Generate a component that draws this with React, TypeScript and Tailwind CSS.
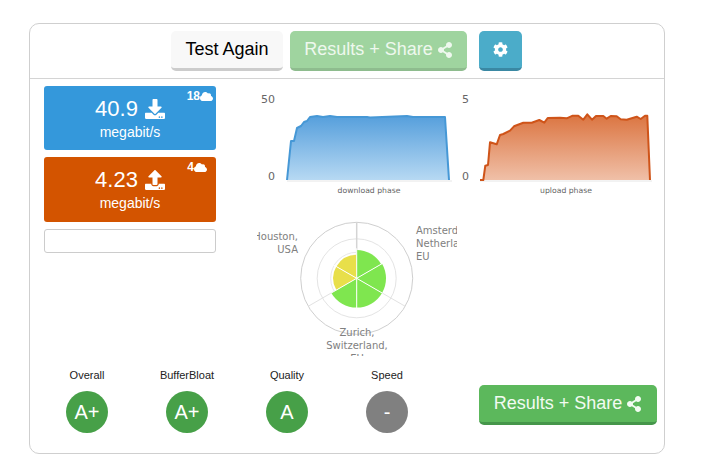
import { FaCloud, FaCog, FaDownload, FaShareAlt, FaUpload } from "react-icons/fa";

const SANS = "font-['Liberation_Sans',Arial,sans-serif]";

const downloadLine =
  "287,180 291,141 294,141 297,128 301,126 304,122 307,121 310,117 317,116 323,117 330,116 337,117 367,117 370,117.5 407,116 413,117 445,117 449,180";
const uploadLine =
  "480,180 483.3,180 485.3,165.7 488,165 490,142.3 496.7,144.3 500,135 503.3,134 510,130.7 514,126.3 523.3,122.7 531.7,122.7 539.3,120 544.3,122.7 547.7,118 560,117.7 566.7,118.3 572.7,115.7 578.3,115.7 583.3,119.7 587.3,114.3 592,119.7 596,116 603.3,116 606.7,118.7 610.7,116 616.7,116.3 620.7,119.3 626.7,119.7 636.7,116.7 640.7,119 645,115.7 647.3,115.7 650,180";

const CX = 356.7;
const CY = 278.3;

// wedge of the radar, angles clockwise from the top
function wedge(from: number, to: number, r: number) {
  const pt = (a: number) => {
    const rad = (a * Math.PI) / 180;
    return `${CX + r * Math.sin(rad)} ${CY - r * Math.cos(rad)}`;
  };
  return `M${CX} ${CY}L${pt(from)}A${r} ${r} 0 0 1 ${pt(to)}Z`;
}

function spoke(a: number, r: number) {
  const rad = (a * Math.PI) / 180;
  return { x2: CX + r * Math.sin(rad), y2: CY - r * Math.cos(rad) };
}

function PhaseChart({
  id,
  viewBox,
  width,
  line,
  stroke,
  top,
  bottom,
  max,
  maxX,
  zeroX,
  axisFrom,
  axisTo,
  label,
  labelX,
}: {
  id: string;
  viewBox: string;
  width: number;
  line: string;
  stroke: string;
  top: string;
  bottom: string;
  max: string;
  maxX: number;
  zeroX: number;
  axisFrom: number;
  axisTo: number;
  label: string;
  labelX: number;
}) {
  return (
    <svg viewBox={viewBox} width={width} height={115} className="block shrink-0">
      <defs>
        <linearGradient id={id} x1="0" y1="0" x2="0" y2="1">
          <stop offset="0" stopColor={top} />
          <stop offset="1" stopColor={bottom} />
        </linearGradient>
      </defs>
      <line x1={axisFrom} y1="181" x2={axisTo} y2="181" stroke="#e6e6e6" />
      <polygon points={line} fill={`url(#${id})`} />
      <polyline points={line} fill="none" stroke={stroke} strokeWidth="2" strokeLinejoin="round" />
      <g fontFamily="'DejaVu Sans',sans-serif" fill="#666">
        <text x={maxX} y="103" fontSize="11" textAnchor="end">{max}</text>
        <text x={zeroX} y="180" fontSize="11" textAnchor="end">0</text>
        <text x={labelX} y="193" fontSize="7.7" textAnchor="middle">{label}</text>
      </g>
    </svg>
  );
}

function Radar() {
  return (
    <svg viewBox="257 215 200 141" width={200} height={141} className="block">
      <g fill="none">
        <circle cx={CX} cy={CY} r="56" stroke="#cfcfcf" />
        <circle cx={CX} cy={CY} r="39.5" stroke="#e4e4e4" />
        <circle cx={CX} cy={CY} r="26" stroke="#e8e8e8" />
      </g>
      <line x1={CX} y1={CY} {...spoke(0, 56)} stroke="#d4d4d4" strokeWidth="1.5" />
      <line x1={CX} y1={CY} {...spoke(120, 56)} stroke="#e2e2e2" />
      <line x1={CX} y1={CY} {...spoke(240, 56)} stroke="#e2e2e2" />
      <path d={wedge(0, 60, 28.3)} fill="#7fe64f" />
      <path d={wedge(60, 120, 29.3)} fill="#7fe64f" />
      <path d={wedge(120, 180, 29.3)} fill="#7fe64f" />
      <path d={wedge(180, 240, 29.3)} fill="#7fe64f" />
      <path d={wedge(240, 300, 23.5)} fill="#e8df4a" />
      <path d={wedge(300, 360, 23.5)} fill="#e8df4a" />
      {[0, 60, 120, 180, 240, 300].map((a) => (
        <line key={a} x1={CX} y1={CY} {...spoke(a, 30)} stroke="#fff" strokeWidth="1" />
      ))}
      <g fontFamily="'DejaVu Sans',sans-serif" fontSize="10" fill="#808080">
        <text x="298" y="240" textAnchor="end">Houston,</text>
        <text x="298" y="253" textAnchor="end">USA</text>
        <text x="416" y="234">Amsterdam,</text>
        <text x="416" y="247">Netherlands,</text>
        <text x="416" y="260">EU</text>
        <text x="357" y="336" textAnchor="middle">Zurich,</text>
        <text x="357" y="349" textAnchor="middle">Switzerland,</text>
        <text x="357" y="362" textAnchor="middle">EU</text>
      </g>
    </svg>
  );
}

function SpeedBox({
  bg,
  height,
  value,
  icon,
  count,
  badgeRight,
}: {
  bg: string;
  height: string;
  value: string;
  icon: React.ReactNode;
  count: string;
  badgeRight: string;
}) {
  return (
    <div className={`relative flex flex-col items-center rounded-[3px] pt-[9px] text-white ${height} ${bg}`}>
      <div className="flex h-[28px] items-center gap-[7px] text-[22px] leading-none">
        {value}
        {icon}
      </div>
      <div className="text-[14px] leading-[18px]">megabit/s</div>
      <div className={`absolute top-[3px] flex items-center text-[12px] leading-[14px] font-bold ${badgeRight}`}>
        {count}
        <FaCloud className="text-[13px]" />
      </div>
    </div>
  );
}

function Grade({ label, grade, color }: { label: string; grade: string; color: string }) {
  return (
    <div className="flex w-[100px] flex-col items-center">
      <div className="h-[15px] text-[11px] leading-[15px] text-[#222]">{label}</div>
      <div className={`mt-[8px] flex h-[42px] w-[42px] items-center justify-center rounded-full text-[20px] text-white ${color}`}>
        {grade}
      </div>
    </div>
  );
}

export default function App() {
  return (
    <div className={`h-[473px] w-[712px] overflow-hidden bg-white pt-[23px] pl-[29px] ${SANS}`}>
      <div className="h-[431px] w-[636px] rounded-[10px] border border-[#cfcfcf]">
        <div className="flex h-[55px] items-start gap-[7px] border-b border-[#d4d4d4] pt-[7px] pl-[141px]">
          <button className="flex h-[40px] w-[112px] items-center justify-center rounded-[5px] border-b-[3px] border-[#cccccc] bg-[#f8f8f8] text-[18px] text-black">
            Test Again
          </button>
          <button className="flex h-[40px] w-[177px] items-center justify-center gap-[4px] rounded-[5px] border-b-[3px] border-[#8ebc8e] bg-[#9fd49f] text-[18px] text-[#eef8ee]">
            Results + Share
            <FaShareAlt className="text-[16px]" />
          </button>
          <button className="ml-[5px] flex h-[40px] w-[43px] items-center justify-center rounded-[5px] border-b-[3px] border-[#3a88a3] bg-[#4bacc9] text-[15px] text-white">
            <FaCog />
          </button>
        </div>

        <div className="flex h-[281px]">
          <div className="ml-[14px] flex w-[172px] shrink-0 flex-col gap-[7px] pt-[7px]">
            <SpeedBox
              bg="bg-[#3498db]"
              height="h-[64px]"
              value="40.9"
              icon={<FaDownload className="text-[20px]" />}
              count="18"
              badgeRight="right-[3px]"
            />
            <SpeedBox
              bg="bg-[#d35400]"
              height="h-[65px]"
              value="4.23"
              icon={<FaUpload className="text-[20px]" />}
              count="4"
              badgeRight="right-[9px]"
            />
            <div className="h-[24px] rounded-[3px] border border-[#cccccc] bg-white" />
          </div>
          <div className="ml-[34px] pt-[6px]">
            <div className="flex">
              <PhaseChart
                id="dl"
                viewBox="250 85 202 115"
                width={202}
                line={downloadLine}
                stroke="#4698d6"
                top="#569fdc"
                bottom="#b7d9f3"
                max="50"
                maxX={275}
                zeroX={275}
                axisFrom={287}
                axisTo={452}
                label="download phase"
                labelX={369}
              />
              <PhaseChart
                id="ul"
                viewBox="452 85 212 115"
                width={212}
                line={uploadLine}
                stroke="#cf5419"
                top="#db7440"
                bottom="#f0c0a8"
                max="5"
                maxX={469}
                zeroX={469}
                axisFrom={480}
                axisTo={652}
                label="upload phase"
                labelX={566}
              />
            </div>
            <div className="mt-[15px] ml-[7px]">
              <Radar />
            </div>
          </div>
        </div>

        <div className="flex pl-[7px]">
          <div className="flex pt-[8px]">
            <Grade label="Overall" grade="A+" color="bg-[#47a048]" />
            <Grade label="BufferBloat" grade="A+" color="bg-[#47a048]" />
            <Grade label="Quality" grade="A" color="bg-[#47a048]" />
            <Grade label="Speed" grade="-" color="bg-[#808080]" />
          </div>
          <button className="mt-[25px] ml-[42px] flex h-[40px] w-[178px] items-center justify-center gap-[4px] rounded-[5px] border-b-[3px] border-[#45964a] bg-[#5cb85c] text-[18px] text-[#f2fbf2]">
            Results + Share
            <FaShareAlt className="text-[16px]" />
          </button>
        </div>
      </div>
    </div>
  );
}
